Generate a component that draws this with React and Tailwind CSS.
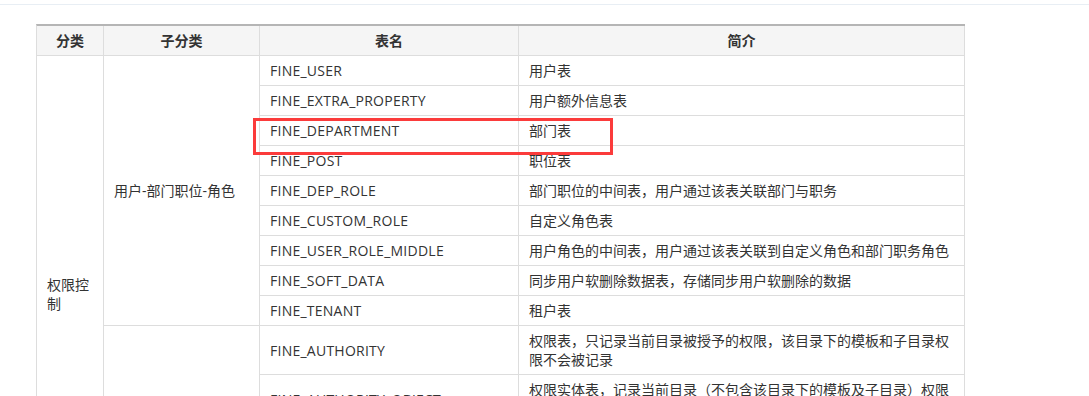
import React from "react";

const rows1 = [
  ["FINE_USER", "用户表"],
  ["FINE_EXTRA_PROPERTY", "用户额外信息表"],
  ["FINE_DEPARTMENT", "部门表"],
  ["FINE_POST", "职位表"],
  ["FINE_DEP_ROLE", "部门职位的中间表，用户通过该表关联部门与职务"],
  ["FINE_CUSTOM_ROLE", "自定义角色表"],
  ["FINE_USER_ROLE_MIDDLE", "用户角色的中间表，用户通过该表关联到自定义角色和部门职务角色"],
  ["FINE_SOFT_DATA", "同步用户软删除数据表，存储同步用户软删除的数据"],
  ["FINE_TENANT", "租户表"],
];

const rows2 = [
  ["FINE_AUTHORITY", "权限表，只记录当前目录被授予的权限，该目录下的模板和子目录权限不会被记录"],
  ["FINE_AUTHORITY_OBJECT", "权限实体表，记录当前目录（不包含该目录下的模板及子目录）权限实体的名称、路径等信息"],
  ["FINE_AUTH_PREFERENCE", "权限偏好设置表，记录权限配置的偏好信息，例如是否开启分级权限等相关设置项"],
  ["FINE_AUTH_EXTRA", "权限扩展信息表"],
  ["FINE_AUTH_TEMPLATE", "权限模板表"],
];

const td = "border-r border-b border-[#dddddd] px-[10px] py-[5px] align-middle";
const nameTd = `${td} tracking-[0.25px]`;

export default function App() {
  return (
    <div
      className="min-h-[396px] bg-white text-[14px] leading-[19px] text-[#333333]"
      style={{ fontFamily: '"Open Sans", "Noto Sans CJK SC", sans-serif' }}
    >
      <div className="mt-[4px] border-t border-[#e8eef4]" />
      <div className="relative pl-[36px] pt-[19px]">
        <table className="table-fixed w-[928px] border-separate border-spacing-0 border-l border-l-[#dddddd] border-t-2 border-t-[#b5b5b5]">
          <thead>
            <tr className="bg-[#f5f5f5]">
              <th className={`${td} w-[67px] font-bold text-center`}>分类</th>
              <th className={`${td} w-[156px] font-bold text-center`}>子分类</th>
              <th className={`${td} w-[259px] font-bold text-center`}>表名</th>
              <th className={`${td} w-[446px] font-bold text-center`}>简介</th>
            </tr>
          </thead>
          <tbody>
            {rows1.map(([name, desc], i) => (
              <tr key={name}>
                {i === 0 && (
                  <td className={td} rowSpan={rows1.length + rows2.length}>
                    权限控制
                  </td>
                )}
                {i === 0 && (
                  <td className={td} rowSpan={rows1.length}>
                    用户-部门职位-角色
                  </td>
                )}
                <td className={nameTd}>{name}</td>
                <td className={td}>{desc}</td>
              </tr>
            ))}
            {rows2.map(([name, desc], i) => (
              <tr key={name}>
                {i === 0 && (
                  <td className={td} rowSpan={rows2.length}>
                    权限
                  </td>
                )}
                <td className={nameTd}>{name}</td>
                <td className={td}>{desc}</td>
              </tr>
            ))}
          </tbody>
        </table>
        <div className="pointer-events-none absolute left-[253px] top-[113px] h-[37px] w-[360px] border-[3px] border-[#fb3b3b]" />
      </div>
    </div>
  );
}
